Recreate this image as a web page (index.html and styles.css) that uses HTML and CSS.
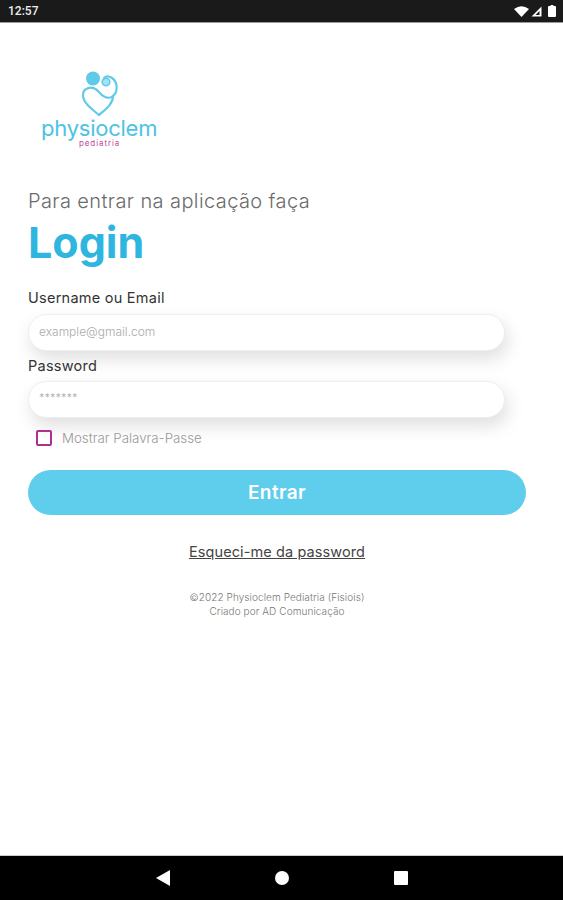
FILE: index.html
```html
<!DOCTYPE html>
<html lang="en">
<head>
  <meta charset="UTF-8">
  <title>Login</title>
  <link rel="stylesheet" href="styles.css">
</head>
<body>

  <div class="statusbar">
    <span class="clock">12:57</span>
    <div class="status-icons">
      <svg width="15" height="11" viewBox="0 0 15 11"><path d="M0 3 Q7.5 -2.5 15 3 L7.5 11 Z" fill="#fff"/></svg>
      <svg width="11" height="11" viewBox="0 0 11 11"><path d="M10.5 .5 V10.5 H.5 Z M8.5 5 L4.5 9 H8.5 Z" fill="#fff" fill-rule="evenodd"/></svg>
      <svg class="battery" width="8" height="12" viewBox="0 0 8 12"><path d="M2.6 0 H5.4 V1 H7 Q8 1 8 2 V11 Q8 12 7 12 H1 Q0 12 0 11 V2 Q0 1 1 1 H2.6 Z" fill="#fff"/></svg>
    </div>
  </div>

  <div class="page">
    <div class="logo">
      <svg class="logo-mark" width="60" height="48" viewBox="0 0 60 48">
        <circle cx="23" cy="8.5" r="7" fill="#5fcbe9"/>
        <circle cx="36" cy="12" r="3.8" fill="#a5e2f3" stroke="#5fcbe9" stroke-width="1.6"/>
        <path d="M29 45 C19 37 13 32 13 25 C13 18 22 15 28 21 C32 26 38 30 43 26 C48 22 48 12 42 8 C39 6 36 6 34 8" fill="none" stroke="#5fcbe9" stroke-width="2.2" stroke-linecap="round"/>
        <path d="M29 45 C36 39 43 34 43 26" fill="none" stroke="#5fcbe9" stroke-width="2.2" stroke-linecap="round"/>
      </svg>
      <div class="logo-name">physioclem</div>
      <div class="logo-sub">pediatria</div>
    </div>

    <p class="intro">Para entrar na aplicação faça</p>
    <h1 class="title">Login</h1>

    <label class="field-label">Username ou Email</label>
    <div class="field">example@gmail.com</div>

    <label class="field-label second">Password</label>
    <div class="field dots">*******</div>

    <div class="show-pass">
      <span class="check"></span>
      <span>Mostrar Palavra-Passe</span>
    </div>

    <button class="submit">Entrar</button>

    <a class="forgot" href="#">Esqueci-me da password</a>

    <div class="credits">
      ©2022 Physioclem Pediatria (Fisiois)<br>
      Criado por AD Comunicação
    </div>
  </div>

  <div class="navbar">
    <svg width="14" height="16" viewBox="0 0 14 16"><path d="M14 0 V16 L0 8 Z" fill="#fff"/></svg>
    <svg width="14" height="14" viewBox="0 0 14 14"><circle cx="7" cy="7" r="7" fill="#fff"/></svg>
    <svg width="14" height="14" viewBox="0 0 14 14"><rect width="14" height="14" rx="1" fill="#fff"/></svg>
  </div>

</body>
</html>
```

FILE: styles.css
```css
body {
  margin: 0;
  height: 900px;
  background: #fff;
  font-family: Inter, "Open Sans", sans-serif;
  display: flex;
  flex-direction: column;
  overflow: hidden;
}

.statusbar {
  height: 23px;
  flex: none;
  background: #1a1a1a;
  border-bottom: 1px solid #999;
  box-sizing: border-box;
  color: #eee;
  display: flex;
  align-items: center;
  justify-content: space-between;
  padding: 0 7px 0 8px;
}

.clock {
  font-family: Roboto, sans-serif;
  font-size: 12px;
  font-weight: 500;
}

.status-icons {
  display: flex;
  align-items: center;
  gap: 2px;
}

.battery {
  margin-left: 4px;
}

.page {
  flex: 1;
  padding: 47px 37px 0 28px;
}

.logo-mark {
  display: block;
  margin-left: 42px;
}

.logo-name {
  margin-left: 13px;
  font-size: 22px;
  font-weight: 400;
  letter-spacing: -.25px;
  line-height: 21px;
  color: #4cc3e4;
}

.logo-sub {
  margin-left: 51px;
  font-size: 8px;
  letter-spacing: .9px;
  line-height: 8px;
  color: #c2489b;
}

.intro {
  margin: 41px 0 0;
  font-size: 20px;
  font-weight: 300;
  letter-spacing: .4px;
  line-height: 26px;
  color: #6b6b6b;
}

.title {
  margin: 3px 0 0;
  font-size: 43px;
  font-weight: 700;
  line-height: 50px;
  color: #2fb6e0;
}

.field-label {
  display: block;
  margin-top: 22px;
  font-size: 14.5px;
  font-weight: 400;
  letter-spacing: .25px;
  line-height: 18px;
  color: #333;
}

.field-label.second {
  margin-top: 6px;
}

.field {
  width: 477px;
  height: 37px;
  margin-top: 7px;
  box-sizing: border-box;
  padding: 0 10px;
  border: 1px solid #eee;
  border-radius: 19px;
  background: #fff;
  box-shadow: 3px 8px 18px rgba(0, 0, 0, .13);
  font-size: 12px;
  font-weight: 300;
  line-height: 33px;
  color: #aaa;
}

.dots {
  margin-top: 6px;
  font-size: 11px;
}

.show-pass {
  display: flex;
  align-items: center;
  gap: 10px;
  margin: 12px 0 0 8px;
  font-size: 13.3px;
  font-weight: 300;
  line-height: 16px;
  color: #999;
}

.check {
  width: 16px;
  height: 16px;
  box-sizing: border-box;
  border: 2px solid #b0308f;
  border-radius: 2px;
}

.submit {
  display: block;
  width: 498px;
  height: 45px;
  margin-top: 24px;
  border: none;
  border-radius: 23px;
  background: #5fcdec;
  color: #fff;
  font-family: inherit;
  font-size: 19px;
  font-weight: 600;
  letter-spacing: .4px;
}

.forgot {
  display: block;
  width: 498px;
  margin-top: 28px;
  text-align: center;
  font-size: 14.5px;
  letter-spacing: .1px;
  line-height: 18px;
  color: #444;
}

.credits {
  width: 498px;
  margin-top: 29px;
  text-align: center;
  font-size: 10px;
  font-weight: 300;
  letter-spacing: .08px;
  line-height: 14px;
  color: #777;
}

.navbar {
  height: 45px;
  flex: none;
  background: #000;
  border-top: 1px solid #ccc;
  box-sizing: border-box;
  display: flex;
  align-items: center;
  justify-content: center;
  gap: 105px;
}
```
